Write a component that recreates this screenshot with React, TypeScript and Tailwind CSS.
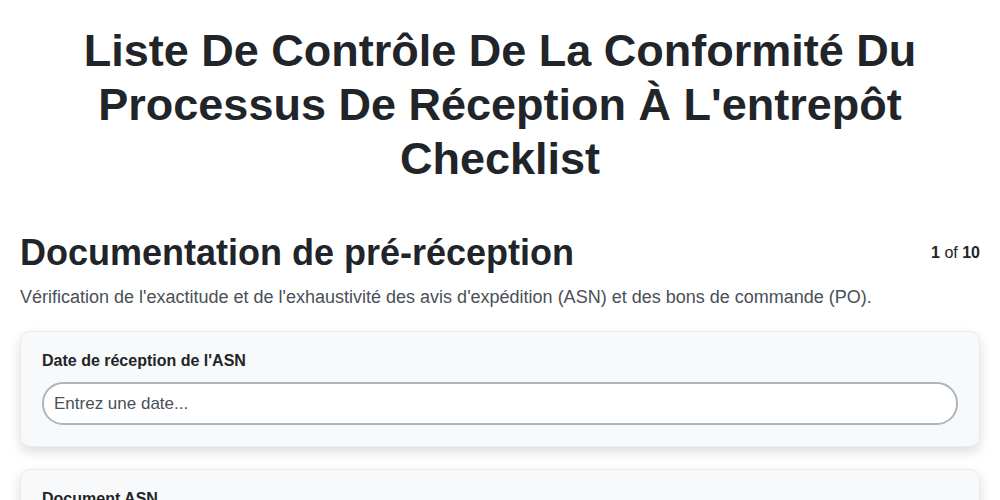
export default function App() {
  return (
    <div className="min-h-screen bg-white text-[#212529]" style={{ fontFamily: '"Liberation Sans", Arial, sans-serif' }}>
      <div className="px-5 pt-[24px] pb-10">
        {/* Title */}
        <h1 className="mx-auto max-w-[900px] text-center text-[45px] font-bold leading-[54px]">
          Liste De Contrôle De La Conformité Du Processus De Réception À L'entrepôt Checklist
        </h1>

        {/* Section header */}
        <div className="mt-[45px] flex items-start justify-between">
          <h2 className="text-[36px] font-bold leading-[43px]">Documentation de pré-réception</h2>
          <div className="pt-[10px] text-[16px] leading-[24px]">
            <span className="font-bold">1</span> of <span className="font-bold">10</span>
          </div>
        </div>
        <p className="mt-[10px] text-[18px] leading-[27px] text-[#495057]">
          Vérification de l'exactitude et de l'exhaustivité des avis d'expédition (ASN) et des bons de commande (PO).
        </p>

        {/* Cards */}
        <div className="mt-[20px] flex flex-col gap-[22px]">
          <div className="rounded-[10px] border border-[#e9ecef] bg-[#f8f9fa] px-[21px] pt-[17px] pb-[21px] shadow-[0_5px_12px_rgba(0,0,0,0.14)]">
            <label className="block text-[16px] font-bold leading-[24px]">Date de réception de l'ASN</label>
            <input
              type="text"
              placeholder="Entrez une date..."
              className="mt-[9px] h-[43px] w-full rounded-[21px] border-2 border-[#adb5bd] bg-white px-[10px] text-[17px] text-[#212529] outline-none placeholder:text-[#495057]"
            />
          </div>
          <div className="rounded-[10px] border border-[#e9ecef] bg-[#f8f9fa] px-[21px] pt-[17px] pb-[21px] shadow-[0_5px_12px_rgba(0,0,0,0.14)]">
            <label className="block text-[16px] font-bold leading-[24px]">Document ASN</label>
            <input
              type="text"
              placeholder="Entrez un texte..."
              className="mt-[9px] h-[43px] w-full rounded-[21px] border-2 border-[#adb5bd] bg-white px-[10px] text-[17px] text-[#212529] outline-none placeholder:text-[#495057]"
            />
          </div>
        </div>
      </div>
    </div>
  );
}
